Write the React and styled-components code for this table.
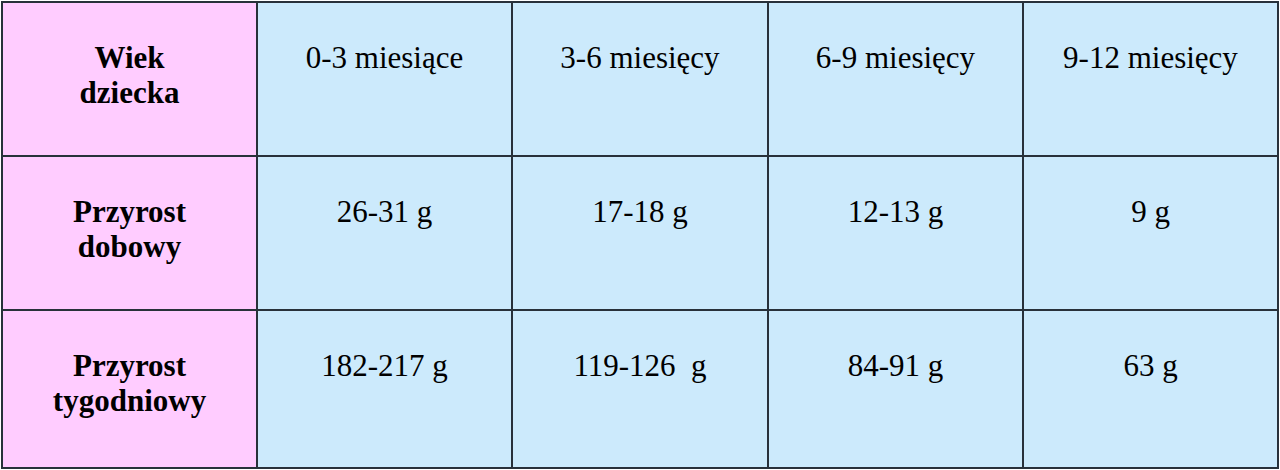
import React from "react";
import styled, { createGlobalStyle } from "styled-components";

const Global = createGlobalStyle`
  html, body { margin: 0; padding: 0; background: #ffffff; }
  body { font-family: "Liberation Serif", "Times New Roman", serif; }
`;

const Table = styled.div`
  display: grid;
  grid-template-columns: 253px 253px 254px 253px 253px;
  grid-template-rows: 152px 152px 156px;
  gap: 2px;
  padding: 2px;
  margin: 1px 0 0 1px;
  width: max-content;
  background: #28313a;
`;

const Cell = styled.div`
  background: ${(p) => (p.$label ? "#ffccff" : "#cceafc")};
  color: #000;
  font-family: "Liberation Serif", "Times New Roman", serif;
  font-size: 31px;
  line-height: 35px;
  font-weight: ${(p) => (p.$label ? 700 : 400)};
  text-align: center;
  padding-top: 37px;
  box-sizing: border-box;
  white-space: pre-line;
`;

const rows = [
  { label: "Wiek\ndziecka", values: ["0-3 miesiące", "3-6 miesięcy", "6-9 miesięcy", "9-12 miesięcy"] },
  { label: "Przyrost\ndobowy", values: ["26-31 g", "17-18 g", "12-13 g", "9 g"] },
  { label: "Przyrost\ntygodniowy", values: ["182-217 g", "119-126\u00a0 g", "84-91 g", "63 g"] },
];

export default function App() {
  return (
    <>
      <Global />
      <Table>
        {rows.map((r) => (
          <React.Fragment key={r.label}>
            <Cell $label>{r.label}</Cell>
            {r.values.map((v, i) => (
              <Cell key={i}>{v}</Cell>
            ))}
          </React.Fragment>
        ))}
      </Table>
    </>
  );
}
